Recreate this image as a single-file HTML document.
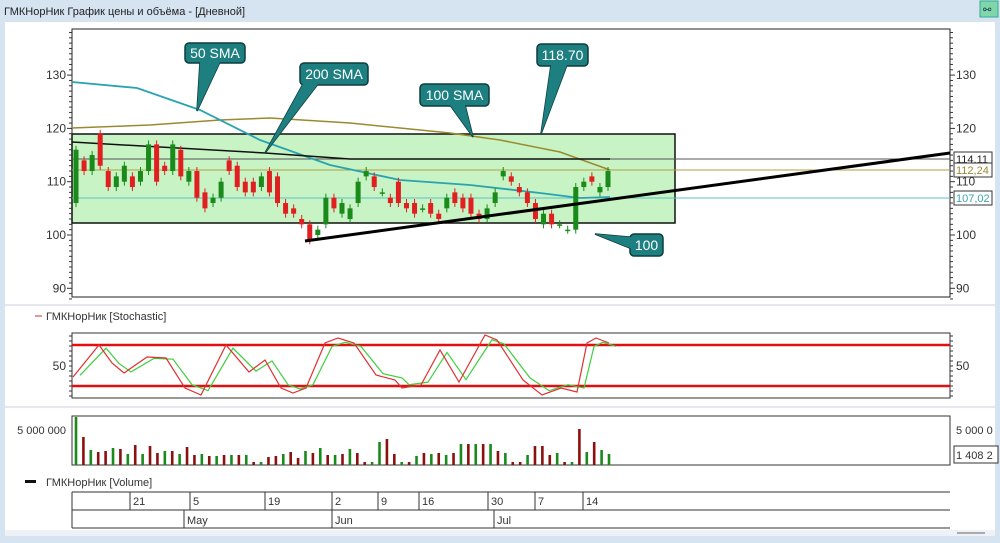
<!DOCTYPE html>
<html><head><meta charset="utf-8"><style>
html,body{margin:0;padding:0;width:1000px;height:543px;overflow:hidden;background:#d6e3f1;font-family:"Liberation Sans","Noto Sans CJK SC",sans-serif}
svg{position:absolute;left:0;top:0}
</style></head><body>
<svg id="s" width="1000" height="543" xmlns="http://www.w3.org/2000/svg" font-family="Liberation Sans, sans-serif">
<rect x="0" y="0" width="1000" height="22" fill="#d6e3f1"/>
<text x="4" y="15" font-size="11" fill="#222">ГМКНорНик График цены и объёма - [Дневной]</text>
<rect x="980" y="1" width="18" height="16" fill="#7fd6a8" stroke="#3a9"/>
<text x="983" y="13" font-size="10" fill="#235">⚯</text>
<rect x="5" y="22" width="990" height="514" fill="#fff"/>
<rect x="5" y="530" width="990" height="6" fill="#eef2f7"/>
<line x1="5" y1="305" x2="995" y2="305" stroke="#ccd" />
<line x1="5" y1="407" x2="995" y2="407" stroke="#ccd" />
</svg>
<script>
const S=document.getElementById('s');const NS='http://www.w3.org/2000/svg';
function el(t,a,txt){const e=document.createElementNS(NS,t);for(const k in a)e.setAttribute(k,a[k]);if(txt!=null)e.textContent=txt;S.appendChild(e);return e}
const py=p=>235-(p-100)*5.33;
el('rect',{x:72,y:29,width:878,height:268,fill:'#fff',stroke:'#222'});
el('rect',{x:72,y:134,width:603,height:89,fill:'#c8f3c4',stroke:'#111','stroke-width':1.5});
for(let p=88;p<=138;p++){const y=py(p);const l=p%10==0?5:3;el('line',{x1:72-l,y1:y,x2:72,y2:y,stroke:'#333'});el('line',{x1:950,y1:y,x2:950+l,y2:y,stroke:'#333'});}
[130,120,110,100,90].forEach(p=>{el('text',{x:66,y:py(p)+4,'font-size':12,fill:'#333','text-anchor':'end'},p);el('text',{x:956,y:py(p)+4,'font-size':12,fill:'#333'},p)});
el('line',{x1:72,y1:159,x2:950,y2:159,stroke:'#555'});
el('line',{x1:72,y1:170,x2:950,y2:170,stroke:'#b0a040'});
el('line',{x1:72,y1:198,x2:950,y2:198,stroke:'#5bc0c8'});
el('rect',{x:954,y:152,width:38,height:13,fill:'#fff',stroke:'#333'});el('text',{x:956,y:163,'font-size':11,fill:'#222'},'114,11');
el('rect',{x:954,y:163,width:38,height:14,fill:'#fff',stroke:'#333'});el('text',{x:956,y:174,'font-size':11,fill:'#9a8a30'},'112,24');
el('rect',{x:954,y:191,width:38,height:14,fill:'#fff',stroke:'#333'});el('text',{x:956,y:202,'font-size':11,fill:'#3aa6b4'},'107,02');
el('polyline',{points:'72,128 150,125 220,120 270,118 350,123 450,133 500,140 560,152 610,170',fill:'none',stroke:'#9a8a30','stroke-width':1.5});
el('polyline',{points:'72,82 137,88 200,110 260,140 330,165 400,180 470,185 540,193 580,198 610,197',fill:'none',stroke:'#2aa3b0','stroke-width':1.8});
el('polyline',{points:'72,142 265,153 350,159 610,159',fill:'none',stroke:'#111','stroke-width':1.5});
const c=[[106,116],[114,112],[112,115],[119,113],[112,109],[109,111],[110,113],[111,109],[110,112],[112,117],[117,110],[113,112],[112,117],[116,111],[110,112],[112,107],[108,105],[106,107],[107,110],[114,112],[113,109],[110,108],[110,108],[109,111],[112,108],[111,106],[106,104],[105,104],[103,102],[102,99],[100,101],[102,107],[107,105],[104,106],[103,105],[106,110],[111,112],[111,109],[108,108],[107,106],[110,106],[106,105],[106,104],[105,105],[106,104],[104,103],[105,107],[108,106],[107,105],[107,104],[104,103],[103,105],[106,108],[111,112],[111,110],[109,108],[108,106],[106,103],[102,104],[104,102],[102,102],[101,101],[101,109],[109,110],[111,110],[108,109],[109,112]];
const n=c.length;const x0=76,x1=608;
c.forEach((v,i)=>{const x=x0+i*(x1-x0)/(n-1);const [o,cl]=v;const up=cl>=o;const col=up?'#1a8a1a':'#e02020';const t=py(Math.max(o,cl)),b=py(Math.min(o,cl));
el('line',{x1:x,y1:t-4,x2:x,y2:b+4,stroke:col});el('rect',{x:x-2.5,y:t,width:5,height:Math.max(b-t,1.5),fill:col});});
el('line',{x1:305,y1:241,x2:950,y2:153,stroke:'#000','stroke-width':3});
function co(x,y,w,h,txt,tail){el('path',{d:tail,fill:'#1e7f80',stroke:'#0d3d3d','stroke-width':1.5});el('rect',{x:x,y:y,width:w,height:h,rx:4,fill:'#1e7f80',stroke:'#0d3d3d','stroke-width':1.5});el('path',{d:tail,fill:'#1e7f80'});el('text',{x:x+w/2,y:y+h/2+5,'font-size':14,fill:'#fff','text-anchor':'middle'},txt)}
co(185,43,60,20,'50 SMA','M200,62 L197,111 L220,62 Z');
co(300,63,68,22,'200 SMA','M303,84 L265,153 L318,84 Z');
co(420,84,69,22,'100 SMA','M450,105 L473,137 L465,105 Z');
co(537,44,51,22,'118.70','M551,65 L541,134 L567,65 Z');
co(630,234,33,22,'100','M640,238 L595,234 L640,252 Z');
el('line',{x1:35,y1:316,x2:42,y2:316,stroke:'#d03030'});
el('text',{x:46,y:320,'font-size':11,fill:'#333'},'ГМКНорНик [Stochastic]');
el('rect',{x:72,y:333,width:878,height:65,fill:'#fff',stroke:'#333'});
el('line',{x1:72,y1:345,x2:950,y2:345,stroke:'#e01010','stroke-width':2.5});
el('line',{x1:72,y1:386,x2:950,y2:386,stroke:'#e01010','stroke-width':2.5});
for(let y=336;y<398;y+=5){el('line',{x1:69,y1:y,x2:72,y2:y,stroke:'#333'});el('line',{x1:950,y1:y,x2:953,y2:y,stroke:'#333'});}
el('text',{x:66,y:370,'font-size':12,fill:'#333','text-anchor':'end'},'50');el('text',{x:956,y:370,'font-size':12,fill:'#333'},'50');
const r='73,377 99,345 112,363 124,373 147,357 166,358 185,388 201,395 226,345 249,372 265,360 281,388 293,393 306,388 325,343 338,338 354,343 376,375 395,380 402,388 421,385 440,350 459,382 485,335 497,340 523,380 542,395 561,388 577,392 587,343 596,338 609,343';
const g=r.split(' ').map(p=>{const[a,b]=p.split(',').map(Number);return (a+7)+','+(b*0.85+366*0.15)}).join(' ');
el('polyline',{points:g,fill:'none',stroke:'#3ed03e','stroke-width':1.2});
el('polyline',{points:r,fill:'none',stroke:'#e03030','stroke-width':1.2});
el('rect',{x:72,y:416,width:878,height:49,fill:'#fff',stroke:'#333'});
el('text',{x:66,y:434,'font-size':11,fill:'#333','text-anchor':'end'},'5 000 000');
el('text',{x:956,y:434,'font-size':11,fill:'#333'},'5 000 0');
el('rect',{x:954,y:446,width:44,height:17,fill:'#fff',stroke:'#333'});el('text',{x:956,y:459,'font-size':11,fill:'#333'},'1 408 2');
const vh=[48,28,15,13,14,17,16,11,20,11,19,12,14,14,11,18,10,11,9,9,10,10,10,10,3,3,8,9,11,13,7,14,12,17,10,10,11,16,12,3,3,23,26,11,3,3,9,12,11,12,10,12,21,21,21,21,21,14,12,3,3,10,19,19,10,12,3,3,36,13,23,15,11];
const vm=vh.length;vh.forEach((h,i)=>{const x=76+i*(609-76)/(vm-1);const gr=[0,2,5,7,9,12,14,17,19,21,23,25,28,31,33,35,37,40,41,44,46,48,50,52,54,56,58,61,65,67,69,71,72].includes(i);el('rect',{x:x-1.3,y:465-h,width:2.6,height:h,fill:gr?'#1a8a1a':'#8b1010'})});
el('rect',{x:25,y:480,width:11,height:3,fill:'#111'});
el('text',{x:46,y:486,'font-size':11,fill:'#333'},'ГМКНорНик [Volume]');
el('line',{x1:72,y1:492,x2:950,y2:492,stroke:'#333'});
el('line',{x1:72,y1:510,x2:950,y2:510,stroke:'#333'});
el('line',{x1:72,y1:528,x2:950,y2:528,stroke:'#333'});
el('line',{x1:72,y1:492,x2:72,y2:528,stroke:'#333'});
[[130,'21'],[190,'5'],[265,'19'],[332,'2'],[378,'9'],[419,'16'],[488,'30'],[535,'7'],[583,'14']].forEach(([x,t])=>{el('line',{x1:x,y1:492,x2:x,y2:510,stroke:'#333'});el('text',{x:x+3,y:505,'font-size':11,fill:'#333'},t)});
[[184,'May'],[332,'Jun'],[494,'Jul']].forEach(([x,t])=>{el('line',{x1:x,y1:510,x2:x,y2:528,stroke:'#333'});el('text',{x:x+3,y:524,'font-size':11,fill:'#333'},t)});
el('line',{x1:957,y1:533,x2:985,y2:533,stroke:'#aaa','stroke-width':2});
</script>
</body></html>
